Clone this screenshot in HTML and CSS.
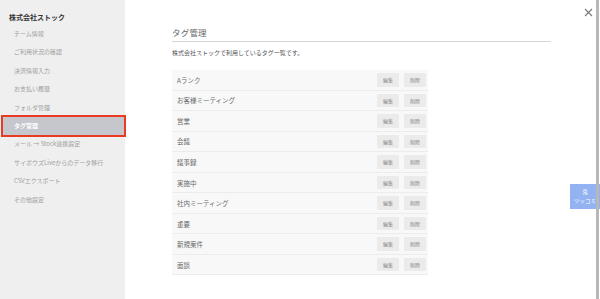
FILE: index.html
```html
<!DOCTYPE html>
<html lang="ja">
<head>
<meta charset="utf-8">
<link rel="stylesheet" href="styles.css">
</head>
<body>
<div class="app">
  <aside class="sidebar">
    <div class="org">株式会社ストック</div>
    <ul class="nav">
      <li>チーム情報</li>
      <li>ご利用状況の確認</li>
      <li>決済情報入力</li>
      <li>お支払い履歴</li>
      <li>フォルダ管理</li>
      <li class="active">タグ管理</li>
      <li>メール → Stock連携設定</li>
      <li>サイボウズLiveからのデータ移行</li>
      <li>CSVエクスポート</li>
      <li>その他設定</li>
    </ul>
  </aside>
  <main class="main">
    <h1 class="title">タグ管理</h1>
    <p class="desc">株式会社ストックで利用しているタグ一覧です。</p>
    <div class="tags">
      <div class="row"><span class="name">Aランク</span><span class="btns"><span class="btn">編集</span><span class="btn">削除</span></span></div>
      <div class="row"><span class="name">お客様ミーティング</span><span class="btns"><span class="btn">編集</span><span class="btn">削除</span></span></div>
      <div class="row"><span class="name">営業</span><span class="btns"><span class="btn">編集</span><span class="btn">削除</span></span></div>
      <div class="row"><span class="name">会議</span><span class="btns"><span class="btn">編集</span><span class="btn">削除</span></span></div>
      <div class="row"><span class="name">議事録</span><span class="btns"><span class="btn">編集</span><span class="btn">削除</span></span></div>
      <div class="row"><span class="name">実施中</span><span class="btns"><span class="btn">編集</span><span class="btn">削除</span></span></div>
      <div class="row"><span class="name">社内ミーティング</span><span class="btns"><span class="btn">編集</span><span class="btn">削除</span></span></div>
      <div class="row"><span class="name">重要</span><span class="btns"><span class="btn">編集</span><span class="btn">削除</span></span></div>
      <div class="row"><span class="name">新規案件</span><span class="btns"><span class="btn">編集</span><span class="btn">削除</span></span></div>
      <div class="row"><span class="name">面談</span><span class="btns"><span class="btn">編集</span><span class="btn">削除</span></span></div>
    </div>
  </main>
</div>
<div class="close"><svg width="9" height="9" viewBox="0 0 9 9"><path d="M1 1 L8 8 M8 1 L1 8" stroke="#777" stroke-width="1.1" fill="none"/></svg></div>
<div class="tsukkomi"><span>鬼</span><span>ツッコミ</span></div>
<div class="edge"></div>
</body>
</html>
```

FILE: styles.css
```css
html, body {
  margin: 0;
  padding: 0;
  background: #fff;
  font-family: "Noto Sans CJK JP", "Noto Sans", sans-serif;
}
.app {
  display: flex;
  height: 299px;
  overflow: hidden;
}
.sidebar {
  width: 125px;
  flex: none;
  background: #efefef;
  padding-top: 10px;
  box-sizing: border-box;
}
.org {
  font-size: 7px;
  font-weight: bold;
  color: #333;
  line-height: 14px;
  padding-left: 9px;
}
.nav {
  list-style: none;
  margin: 1px 0 0;
  padding: 0;
}
.nav li {
  height: 18.4px;
  line-height: 18.4px;
  font-size: 6px;
  color: #a0a0a0;
  padding-left: 14px;
  white-space: nowrap;
}
.nav li.active {
  background: #c6c7cd;
  color: #fff;
  font-weight: bold;
  margin: 0 1px 0 3px;
  padding-left: 11px;
  outline: 2px solid #ea3a21;
}
.main {
  flex: 1;
  padding: 24px 0 0 47px;
}
.title {
  width: 379px;
  margin: 0;
  font-size: 8.5px;
  font-weight: normal;
  color: #666;
  line-height: 16px;
  padding-bottom: 1px;
  border-bottom: 1px solid #d6d6d6;
  letter-spacing: 0.2px;
}
.desc {
  margin: 5px 0 11px;
  font-size: 6px;
  line-height: 12px;
  color: #555;
}
.tags {
  width: 256px;
}
.row {
  display: flex;
  align-items: center;
  justify-content: space-between;
  height: 19.55px;
  background: #f8f8f8;
  border-bottom: 1px solid #ececec;
  padding: 0 2px 0 5px;
}
.name {
  font-size: 6.5px;
  color: #6a6a6a;
}
.btns {
  display: flex;
  gap: 5px;
}
.btn {
  width: 22px;
  height: 13.5px;
  line-height: 13.5px;
  text-align: center;
  background: #ebebeb;
  border-radius: 1px;
  font-size: 5px;
  color: #888;
}
.close {
  position: absolute;
  left: 584px;
  top: 8px;
  line-height: 0;
}
.tsukkomi {
  position: absolute;
  left: 570px;
  top: 184px;
  width: 30px;
  height: 25px;
  background: #93b2f2;
  color: #fff;
  font-size: 5.5px;
  line-height: 8.5px;
  display: flex;
  flex-direction: column;
  align-items: center;
  justify-content: center;
  white-space: nowrap;
}
.edge {
  position: absolute;
  right: 1px;
  top: 0;
  width: 3px;
  height: 299px;
  background: #b8b8b8;
}
```
